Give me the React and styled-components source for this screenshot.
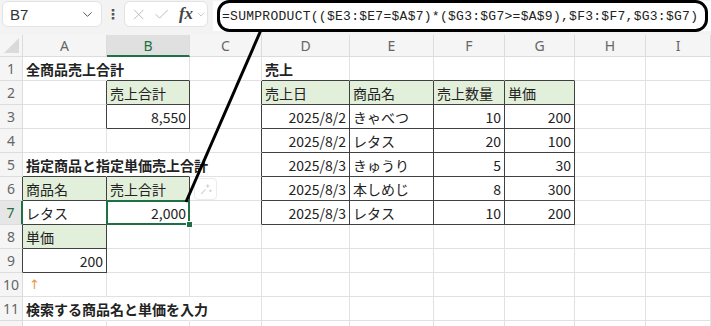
import React from "react";
import styled, { createGlobalStyle, css } from "styled-components";
import { X, Check, ChevronDown } from "lucide-react";

const Global = createGlobalStyle`
  html, body { margin: 0; padding: 0; background: #fff; }
  body { width: 711px; height: 326px; overflow: hidden; font-family: "Noto Sans CJK JP", "Noto Sans", sans-serif; }
`;

const Page = styled.div`
  position: relative;
  width: 711px;
  height: 326px;
  overflow: hidden;
  display: flex;
  flex-direction: column;
  background: #fff;
`;

const TopBar = styled.div`
  height: 35px;
  flex: none;
  background: #f3f3f3;
  display: flex;
  align-items: flex-start;
  padding-top: 1px;
  box-sizing: border-box;
`;

const NameBox = styled.div`
  margin-left: 2px;
  width: 100px;
  height: 26px;
  box-sizing: border-box;
  background: #fff;
  border: 1px solid #e3e3e3;
  border-radius: 6px;
  display: flex;
  align-items: center;
  justify-content: space-between;
  padding: 0 6px 0 7px;
  font-family: "Liberation Sans", sans-serif;
  font-size: 15px;
  color: #333;
`;

const Dots = styled.div`
  width: 22px;
  text-align: center;
  font-family: "DejaVu Sans", sans-serif;
  font-size: 14px;
  font-weight: bold;
  line-height: 26px;
  color: #555;
`;

const FuncBox = styled.div`
  width: 84px;
  height: 26px;
  box-sizing: border-box;
  background: #fff;
  border: 1px solid #e3e3e3;
  border-radius: 6px;
  display: flex;
  align-items: center;
  gap: 6px;
  padding-left: 5px;
  color: #b8b8b8;
`;

const Fx = styled.span`
  font-family: "Liberation Serif", serif;
  font-style: italic;
  font-weight: bold;
  font-size: 17px;
  color: #444;
  margin-left: 2px;
  margin-right: -4px;
`;

const FormulaBox = styled.div`
  margin-left: 5px;
  flex: 1;
  height: 30px;
  background: #fff;
  display: flex;
  align-items: center;
  padding-left: 9px;
  font-family: "Liberation Mono", monospace;
  font-size: 13px;
  letter-spacing: 0.27px;
  color: #222;
  white-space: nowrap;
`;

const Sheet = styled.div`
  display: grid;
  grid-template-columns: 23px 84px 83px 72px 88px 84px 71px 70px 71px 1fr;
  grid-template-rows: 22px;
  grid-auto-rows: 24px;
`;

const ColHead = styled.div`
  background: ${(p) => (p.$sel ? "#e0e0e0" : "#f5f5f5")};
  color: ${(p) => (p.$sel ? "#1e7145" : "#666")};
  border-right: 1px solid #dcdcdc;
  border-bottom: ${(p) => (p.$sel ? "2px solid #1e7145" : "1px solid #dcdcdc")};
  display: flex;
  align-items: center;
  justify-content: center;
  font-family: "Noto Sans", sans-serif;
  font-size: 14px;
  box-sizing: border-box;
`;

const Corner = styled.div`
  background: #f5f5f5;
  border-right: 1px solid #dcdcdc;
  border-bottom: 1px solid #dcdcdc;
  box-sizing: border-box;
  position: relative;
  &::after {
    content: "";
    position: absolute;
    right: 3px;
    bottom: 3px;
    border-style: solid;
    border-width: 0 0 15px 15px;
    border-color: transparent transparent #dadada transparent;
  }
`;

const RowHead = styled.div`
  background: ${(p) => (p.$sel ? "#e6e6e6" : "#f5f5f5")};
  color: ${(p) => (p.$sel ? "#1e7145" : "#666")};
  border-right: ${(p) => (p.$sel ? "2px solid #1e7145" : "1px solid #dcdcdc")};
  border-bottom: 1px solid #dcdcdc;
  display: flex;
  align-items: center;
  justify-content: center;
  font-family: "Noto Sans", sans-serif;
  font-size: 14px;
  box-sizing: border-box;
`;

const Cell = styled.div`
  position: relative;
  box-sizing: border-box;
  border-right: 1px solid ${(p) => p.$rc};
  border-bottom: 1px solid ${(p) => p.$bc};
  background: ${(p) => (p.$fill ? "#e2efda" : "transparent")};
  display: flex;
  align-items: center;
  justify-content: ${(p) => (p.$num ? "flex-end" : "flex-start")};
  padding: 0 3px 0 3px;
  font-size: 14px;
  color: #222;
  white-space: nowrap;
  overflow: visible;
  font-weight: ${(p) => (p.$bold ? 700 : 400)};
  z-index: ${(p) => (p.$over ? 1 : 0)};
  ${(p) =>
    p.$sel &&
    css`
      z-index: 2;
      &::after {
        content: "";
        position: absolute;
        left: -1px;
        top: -1px;
        right: -1px;
        bottom: -1px;
        border: 2px solid #1e7145;
      }
      &::before {
        content: "";
        position: absolute;
        right: -4px;
        bottom: -4px;
        width: 5px;
        height: 5px;
        background: #1e7145;
        border: 1px solid #fff;
        z-index: 3;
      }
    `}
`;

const Arrow = styled.span`
  color: #e8964a;
  font-family: "DejaVu Sans", sans-serif;
  font-size: 13px;
  margin-left: 3px;
`;

const QuickBtn = styled.div`
  width: 23px;
  height: 22px;
  box-sizing: border-box;
  border: 1px solid #ececec;
  border-radius: 4px;
  margin-left: 1px;
  display: flex;
  align-items: center;
  justify-content: center;
`;

const Overlay = styled.svg`
  position: absolute;
  left: 0;
  top: 0;
  pointer-events: none;
  z-index: 10;
`;

const GRID = "#e1e1e1";
const DARK = "#404040";

const boxes = [
  [2, 3, 1, 1],
  [6, 7, 0, 1],
  [8, 9, 0, 0],
  [2, 7, 3, 6],
];
const inBox = (r, c) => boxes.some(([r1, r2, c1, c2]) => r >= r1 && r <= r2 && c >= c1 && c <= c2);

const data = {
  1: { 0: { t: "全商品売上合計", bold: true, over: true }, 3: { t: "売上", bold: true } },
  2: {
    1: { t: "売上合計", fill: true },
    3: { t: "売上日", fill: true },
    4: { t: "商品名", fill: true },
    5: { t: "売上数量", fill: true },
    6: { t: "単価", fill: true },
  },
  3: { 1: { t: "8,550", num: true }, 3: { t: "2025/8/2", num: true }, 4: { t: "きゃべつ" }, 5: { t: "10", num: true }, 6: { t: "200", num: true } },
  4: { 3: { t: "2025/8/2", num: true }, 4: { t: "レタス" }, 5: { t: "20", num: true }, 6: { t: "100", num: true } },
  5: {
    0: { t: "指定商品と指定単価売上合計", bold: true, over: true },
    1: { hideRight: true },
    3: { t: "2025/8/3", num: true },
    4: { t: "きゅうり" },
    5: { t: "5", num: true },
    6: { t: "30", num: true },
  },
  6: {
    0: { t: "商品名", fill: true },
    1: { t: "売上合計", fill: true },
    2: { quick: true },
    3: { t: "2025/8/3", num: true },
    4: { t: "本しめじ" },
    5: { t: "8", num: true },
    6: { t: "300", num: true },
  },
  7: {
    0: { t: "レタス" },
    1: { t: "2,000", num: true, sel: true },
    3: { t: "2025/8/3", num: true },
    4: { t: "レタス" },
    5: { t: "10", num: true },
    6: { t: "200", num: true },
  },
  8: { 0: { t: "単価", fill: true } },
  9: { 0: { t: "200", num: true } },
  10: { 0: { arrow: true } },
  11: { 0: { t: "検索する商品名と単価を入力", bold: true, over: true }, 1: { hideRight: true } },
};

const letters = ["A", "B", "C", "D", "E", "F", "G", "H", "I"];

function Sparkle() {
  return (
    <svg width="14" height="14" viewBox="0 0 16 16" fill="none" stroke="#d0d0d0" strokeWidth="1.2">
      <path d="M10 2.5v4M8 4.5h4" />
      <path d="M13 8.5v3M11.5 10h3" />
      <path d="M2.5 13.5l5-5" />
    </svg>
  );
}

export default function App() {
  const rows = [];
  for (let r = 1; r <= 12; r++) {
    rows.push(
      <RowHead key={`h${r}`} $sel={r === 7} style={inBox(r, 0) && r !== 7 ? { borderRightColor: DARK } : undefined}>
        {r <= 11 ? r : ""}
      </RowHead>
    );
    for (let c = 0; c < 9; c++) {
      const d = (data[r] && data[r][c]) || {};
      const darkR = inBox(r, c) || inBox(r, c + 1);
      const darkB = inBox(r, c) || inBox(r + 1, c);
      let rc = darkR ? DARK : GRID;
      if ((d.over || d.hideRight) && !darkR) rc = "#fff";
      const bc = darkB ? DARK : GRID;
      rows.push(
        <Cell key={`${r}-${c}`} $rc={rc} $bc={bc} $fill={d.fill} $num={d.num} $bold={d.bold} $over={d.over} $sel={d.sel}>
          {d.t}
          {d.arrow && <Arrow>↑</Arrow>}
          {d.quick && (
            <QuickBtn>
              <Sparkle />
            </QuickBtn>
          )}
        </Cell>
      );
    }
  }

  return (
    <Page>
      <Global />
      <TopBar>
        <NameBox>
          <span>B7</span>
          <ChevronDown size={15} color="#555" strokeWidth={1.6} />
        </NameBox>
        <Dots>⋮</Dots>
        <FuncBox>
          <X size={19} strokeWidth={1.3} />
          <Check size={19} strokeWidth={1.3} />
          <Fx>fx</Fx>
          <ChevronDown size={13} strokeWidth={1.6} />
        </FuncBox>
        <FormulaBox>=SUMPRODUCT(($E3:$E7=$A$7)*($G3:$G7&gt;=$A$9),$F3:$F7,$G3:$G7)</FormulaBox>
      </TopBar>
      <Sheet>
        <Corner />
        {letters.map((l) => (
          <ColHead key={l} $sel={l === "B"}>
            {l}
          </ColHead>
        ))}
        {rows}
      </Sheet>
      <Overlay width="711" height="326">
        <rect x="218.5" y="1.5" width="488" height="29" rx="11" ry="11" fill="none" stroke="#000" strokeWidth="3" />
        <line x1="261" y1="30" x2="186" y2="202" stroke="#000" strokeWidth="3" />
      </Overlay>
    </Page>
  );
}
